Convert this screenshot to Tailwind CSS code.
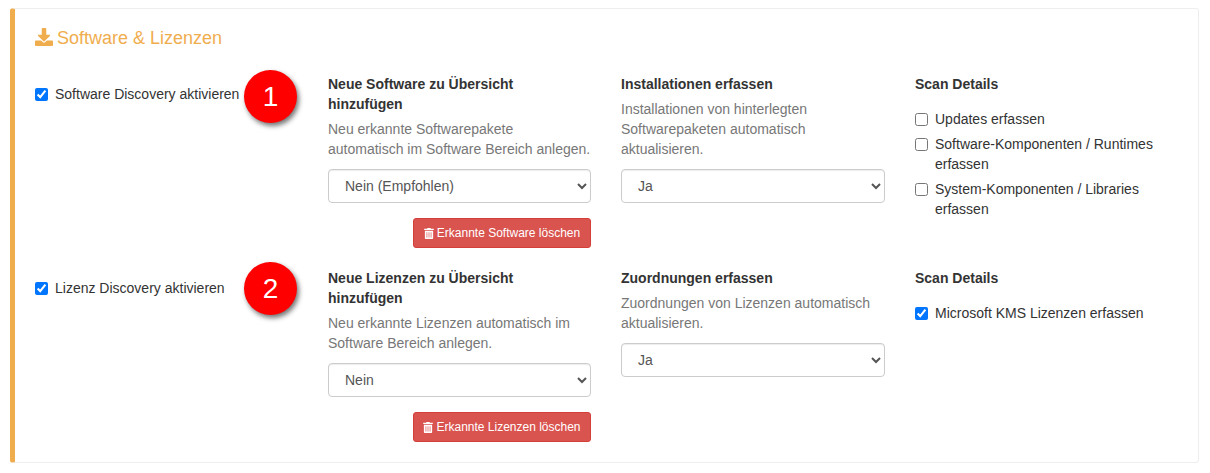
<!DOCTYPE html>
<html lang="de">
  <head>
    <meta charset="UTF-8" />
    <title>Software & Lizenzen</title>
    <script src="https://cdn.jsdelivr.net/npm/@tailwindcss/browser@4"></script>
  </head>
  <body class="bg-white font-['Liberation_Sans',Arial,sans-serif] text-[14px] leading-[20px] text-[#333]">
    <div class="pt-2 pl-[10px] pr-[11px] pb-[10px]">
      <div class="relative h-[455px] rounded-[3px] border border-[#eee] border-l-[5px] border-l-[#f0ad4e] pl-[20px] pt-[16px]">
        <h4 class="flex items-center gap-[4px] h-[26px] text-[18px] leading-[26px] text-[#f0ad4e] mb-[23px]">
          <svg class="w-[18px] h-[18px] -mt-[3px]" viewBox="0 0 512 512" fill="#f0ad4e"><path d="M216 0h80c13 0 24 11 24 24v168h88c18 0 27 21 14 34L270 378c-7 7-21 7-28 0L90 226c-13-13-4-34 14-34h88V24c0-13 11-24 24-24zM512 376v112c0 13-11 24-24 24H24c-13 0-24-11-24-24V376c0-13 11-24 24-24h147l49 49c20 20 52 20 72 0l49-49h147c13 0 24 11 24 24z"/></svg>
          Software &amp; Lizenzen
        </h4>

        <div class="grid grid-cols-[293px_293px_294px_1fr] h-[194px]">
          <label class="flex items-start gap-[7px] h-[40px] pt-[10px]">
            <input type="checkbox" checked class="w-[13px] h-[13px] mt-[4px] accent-[#0075ff]" />
            <span>Software Discovery aktivieren</span>
          </label>
          <div class="w-[263px]">
            <div class="font-bold mb-[5px]">Neue Software zu Übersicht hinzufügen</div>
            <p class="text-[#777] mb-[10px]">Neu erkannte Softwarepakete automatisch im Software Bereich anlegen.</p>
            <select class="w-full h-[34px] rounded-[4px] border border-[#ccc] bg-white px-3 text-[#555] shadow-[inset_0_1px_1px_rgba(0,0,0,0.075)]"><option>Nein (Empfohlen)</option></select>
            <div class="flex justify-end mt-[15px]">
              <button class="flex items-center gap-[3px] h-[30px] w-[178px] justify-center rounded-[3px] border border-[#d43f3a] bg-[#d9534f] text-[12px] text-white">
                <svg class="w-[10px] h-[11px]" viewBox="0 0 448 512" fill="#fff"><path d="M32 464c0 27 21 48 48 48h288c27 0 48-21 48-48V128H32v336zm272-256c0-9 7-16 16-16s16 7 16 16v224c0 9-7 16-16 16s-16-7-16-16V208zm-96 0c0-9 7-16 16-16s16 7 16 16v224c0 9-7 16-16 16s-16-7-16-16V208zm-96 0c0-9 7-16 16-16s16 7 16 16v224c0 9-7 16-16 16s-16-7-16-16V208zM432 32H312l-9-19C299 5 291 0 282 0H166c-9 0-17 5-21 13l-9 19H16C7 32 0 39 0 48v32c0 9 7 16 16 16h416c9 0 16-7 16-16V48c0-9-7-16-16-16z"/></svg>
                Erkannte Software löschen
              </button>
            </div>
          </div>
          <div class="w-[264px]">
            <div class="font-bold mb-[5px]">Installationen erfassen</div>
            <p class="text-[#777] mb-[10px]">Installationen von hinterlegten Softwarepaketen automatisch aktualisieren.</p>
            <select class="w-full h-[34px] rounded-[4px] border border-[#ccc] bg-white px-3 text-[#555] shadow-[inset_0_1px_1px_rgba(0,0,0,0.075)]"><option>Ja</option></select>
          </div>
          <div class="w-[248px]">
            <div class="font-bold mb-[15px]">Scan Details</div>
            <label class="flex items-start gap-[7px] mb-[5px]"><input type="checkbox" class="w-[13px] h-[13px] mt-[4px] shrink-0" /><span>Updates erfassen</span></label>
            <label class="flex items-start gap-[7px] mb-[5px]"><input type="checkbox" class="w-[13px] h-[13px] mt-[4px] shrink-0" /><span>Software-Komponenten / Runtimes erfassen</span></label>
            <label class="flex items-start gap-[7px]"><input type="checkbox" class="w-[13px] h-[13px] mt-[4px] shrink-0" /><span>System-Komponenten / Libraries erfassen</span></label>
          </div>
        </div>

        <div class="grid grid-cols-[293px_293px_294px_1fr]">
          <label class="flex items-start gap-[7px] h-[40px] pt-[10px]">
            <input type="checkbox" checked class="w-[13px] h-[13px] mt-[4px] accent-[#0075ff]" />
            <span>Lizenz Discovery aktivieren</span>
          </label>
          <div class="w-[263px]">
            <div class="font-bold mb-[5px]">Neue Lizenzen zu Übersicht hinzufügen</div>
            <p class="text-[#777] mb-[10px]">Neu erkannte Lizenzen automatisch im Software Bereich anlegen.</p>
            <select class="w-full h-[34px] rounded-[4px] border border-[#ccc] bg-white px-3 text-[#555] shadow-[inset_0_1px_1px_rgba(0,0,0,0.075)]"><option>Nein</option></select>
            <div class="flex justify-end mt-[15px]">
              <button class="flex items-center gap-[3px] h-[30px] w-[178px] justify-center rounded-[3px] border border-[#d43f3a] bg-[#d9534f] text-[12px] text-white">
                <svg class="w-[10px] h-[11px]" viewBox="0 0 448 512" fill="#fff"><path d="M32 464c0 27 21 48 48 48h288c27 0 48-21 48-48V128H32v336zm272-256c0-9 7-16 16-16s16 7 16 16v224c0 9-7 16-16 16s-16-7-16-16V208zm-96 0c0-9 7-16 16-16s16 7 16 16v224c0 9-7 16-16 16s-16-7-16-16V208zm-96 0c0-9 7-16 16-16s16 7 16 16v224c0 9-7 16-16 16s-16-7-16-16V208zM432 32H312l-9-19C299 5 291 0 282 0H166c-9 0-17 5-21 13l-9 19H16C7 32 0 39 0 48v32c0 9 7 16 16 16h416c9 0 16-7 16-16V48c0-9-7-16-16-16z"/></svg>
                Erkannte Lizenzen löschen
              </button>
            </div>
          </div>
          <div class="w-[264px]">
            <div class="font-bold mb-[5px]">Zuordnungen erfassen</div>
            <p class="text-[#777] mb-[10px]">Zuordnungen von Lizenzen automatisch aktualisieren.</p>
            <select class="w-full h-[34px] rounded-[4px] border border-[#ccc] bg-white px-3 text-[#555] shadow-[inset_0_1px_1px_rgba(0,0,0,0.075)]"><option>Ja</option></select>
          </div>
          <div class="w-[248px]">
            <div class="font-bold mb-[15px]">Scan Details</div>
            <label class="flex items-start gap-[7px]"><input type="checkbox" checked class="w-[13px] h-[13px] mt-[4px] shrink-0 accent-[#0075ff]" /><span>Microsoft KMS Lizenzen erfassen</span></label>
          </div>
        </div>

        <!-- number badges over the form -->
        <div class="absolute left-[229px] top-[61px] flex h-[53px] w-[53px] items-center justify-center rounded-full bg-[#ff0000] text-[28px] text-white shadow-[2px_3px_5px_rgba(0,0,0,0.55)]">1</div>
        <div class="absolute left-[229px] top-[253px] flex h-[53px] w-[53px] items-center justify-center rounded-full bg-[#ff0000] text-[28px] text-white shadow-[2px_3px_5px_rgba(0,0,0,0.55)]">2</div>
      </div>
    </div>
  </body>
</html>
